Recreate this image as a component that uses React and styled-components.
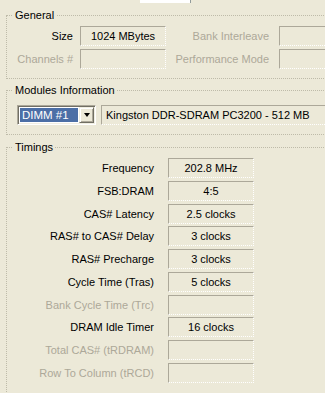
import React from "react";
import styled, { createGlobalStyle } from "styled-components";

const GlobalStyle = createGlobalStyle`
  html, body {
    margin: 0;
    padding: 0;
    background: #ece9d8;
    overflow: hidden;
  }
  body {
    font-family: "Liberation Sans", Arial, sans-serif;
    font-size: 11px;
    color: #000;
  }
`;

const Page = styled.div`
  width: 325px;
  height: 393px;
  overflow: hidden;
`;

const TabStub = styled.div`
  margin-left: 140px;
  width: 50px;
  height: 3px;
  background: #ffffff;
  border-right: 1px solid #919b9c;
`;

const Group = styled.fieldset`
  margin: ${(p) => p.$top}px 0 0 6px;
  padding: ${(p) => p.$pad};
  width: 380px;
  min-width: 0;
  min-height: ${(p) => p.$minH || 0}px;
  box-sizing: border-box;
  border: 1px dotted #bebba9;
`;

const Legend = styled.legend`
  margin-left: 6px;
  padding: 0 2px;
  line-height: 14px;
  font-size: 11px;
  color: #000;
`;

const GeneralGrid = styled.div`
  display: grid;
  grid-template-columns: 73px 86px 113px 86px;
  grid-auto-rows: 20px;
  row-gap: 3px;
`;

const Label = styled.div`
  display: flex;
  align-items: center;
  justify-content: flex-end;
  padding-right: ${(p) => p.$gap || 0}px;
  color: ${(p) => (p.$disabled ? "#aca899" : "#000")};
  white-space: nowrap;
`;

const Field = styled.div`
  box-sizing: border-box;
  height: 20px;
  display: flex;
  align-items: center;
  justify-content: ${(p) => (p.$left ? "flex-start" : "center")};
  padding-left: ${(p) => (p.$left ? 4 : 0)}px;
  border-top: 1px solid #aca899;
  border-left: 1px solid #aca899;
  border-right: 1px dotted #ffffff;
  border-bottom: 1px dotted #ffffff;
  white-space: nowrap;
`;

const ModuleRow = styled.div`
  display: flex;
  align-items: center;
  gap: 5px;
  padding-left: 10px;
`;

const Combo = styled.div`
  box-sizing: border-box;
  width: 79px;
  height: 20px;
  display: flex;
  align-items: stretch;
  padding: 1px;
  background: #ffffff;
  border-top: 1px solid #aca899;
  border-left: 1px solid #aca899;
  border-right: 1px solid #ffffff;
  border-bottom: 1px solid #ffffff;
  box-shadow: inset 1px 1px 0 #716f64, inset -1px -1px 0 #f1efe2;
`;

const ComboValue = styled.div`
  flex: 1;
  margin: 1px;
  display: flex;
  align-items: center;
  padding-left: 2px;
  background: #4c6fa6;
  color: #ffffff;
  font-size: 11.5px;
`;

const ComboButton = styled.div`
  width: 15px;
  box-sizing: border-box;
  display: flex;
  align-items: center;
  justify-content: center;
  background: #ece9d8;
  border-top: 1px solid #f1efe2;
  border-left: 1px solid #f1efe2;
  border-right: 1px solid #716f64;
  border-bottom: 1px solid #716f64;
  box-shadow: inset 1px 1px 0 #ffffff, inset -1px -1px 0 #aca899;
`;

const Arrow = styled.span`
  width: 0;
  height: 0;
  border-left: 3.5px solid transparent;
  border-right: 3.5px solid transparent;
  border-top: 4px solid #000;
`;

const ModuleField = styled(Field)`
  flex: 1;
`;

const TimingGrid = styled.div`
  display: grid;
  grid-template-columns: 147px 86px;
  grid-auto-rows: 20px;
  column-gap: 14px;
  row-gap: 2.78px;
`;

const timings = [
  ["Frequency", "202.8 MHz"],
  ["FSB:DRAM", "4:5"],
  ["CAS# Latency", "2.5 clocks"],
  ["RAS# to CAS# Delay", "3 clocks"],
  ["RAS# Precharge", "3 clocks"],
  ["Cycle Time (Tras)", "5 clocks"],
  ["Bank Cycle Time (Trc)", null],
  ["DRAM Idle Timer", "16 clocks"],
  ["Total CAS# (tRDRAM)", null],
  ["Row To Column (tRCD)", null],
];

export default function App() {
  return (
    <Page>
      <GlobalStyle />
      <TabStub />

      <Group $top={5} $pad="4px 0 9px 0">
        <Legend>General</Legend>
        <GeneralGrid>
          <Label $gap={7}>Size</Label>
          <Field>1024 MBytes</Field>
          <Label $gap={10} $disabled>Bank Interleave</Label>
          <Field />
          <Label $gap={7} $disabled>Channels #</Label>
          <Field />
          <Label $gap={10} $disabled>Performance Mode</Label>
          <Field />
        </GeneralGrid>
      </Group>

      <Group $top={4} $pad="8px 0 9px 0">
        <Legend>Modules Information</Legend>
        <ModuleRow>
          <Combo>
            <ComboValue>DIMM #1</ComboValue>
            <ComboButton>
              <Arrow />
            </ComboButton>
          </Combo>
          <ModuleField $left>Kingston DDR-SDRAM PC3200 - 512 MB</ModuleField>
        </ModuleRow>
      </Group>

      <Group $top={5} $pad="4px 0 20px 0" $minH={300}>
        <Legend>Timings</Legend>
        <TimingGrid>
          {timings.map(([label, value]) => (
            <React.Fragment key={label}>
              <Label $disabled={value === null}>{label}</Label>
              <Field>{value}</Field>
            </React.Fragment>
          ))}
        </TimingGrid>
      </Group>
    </Page>
  );
}
